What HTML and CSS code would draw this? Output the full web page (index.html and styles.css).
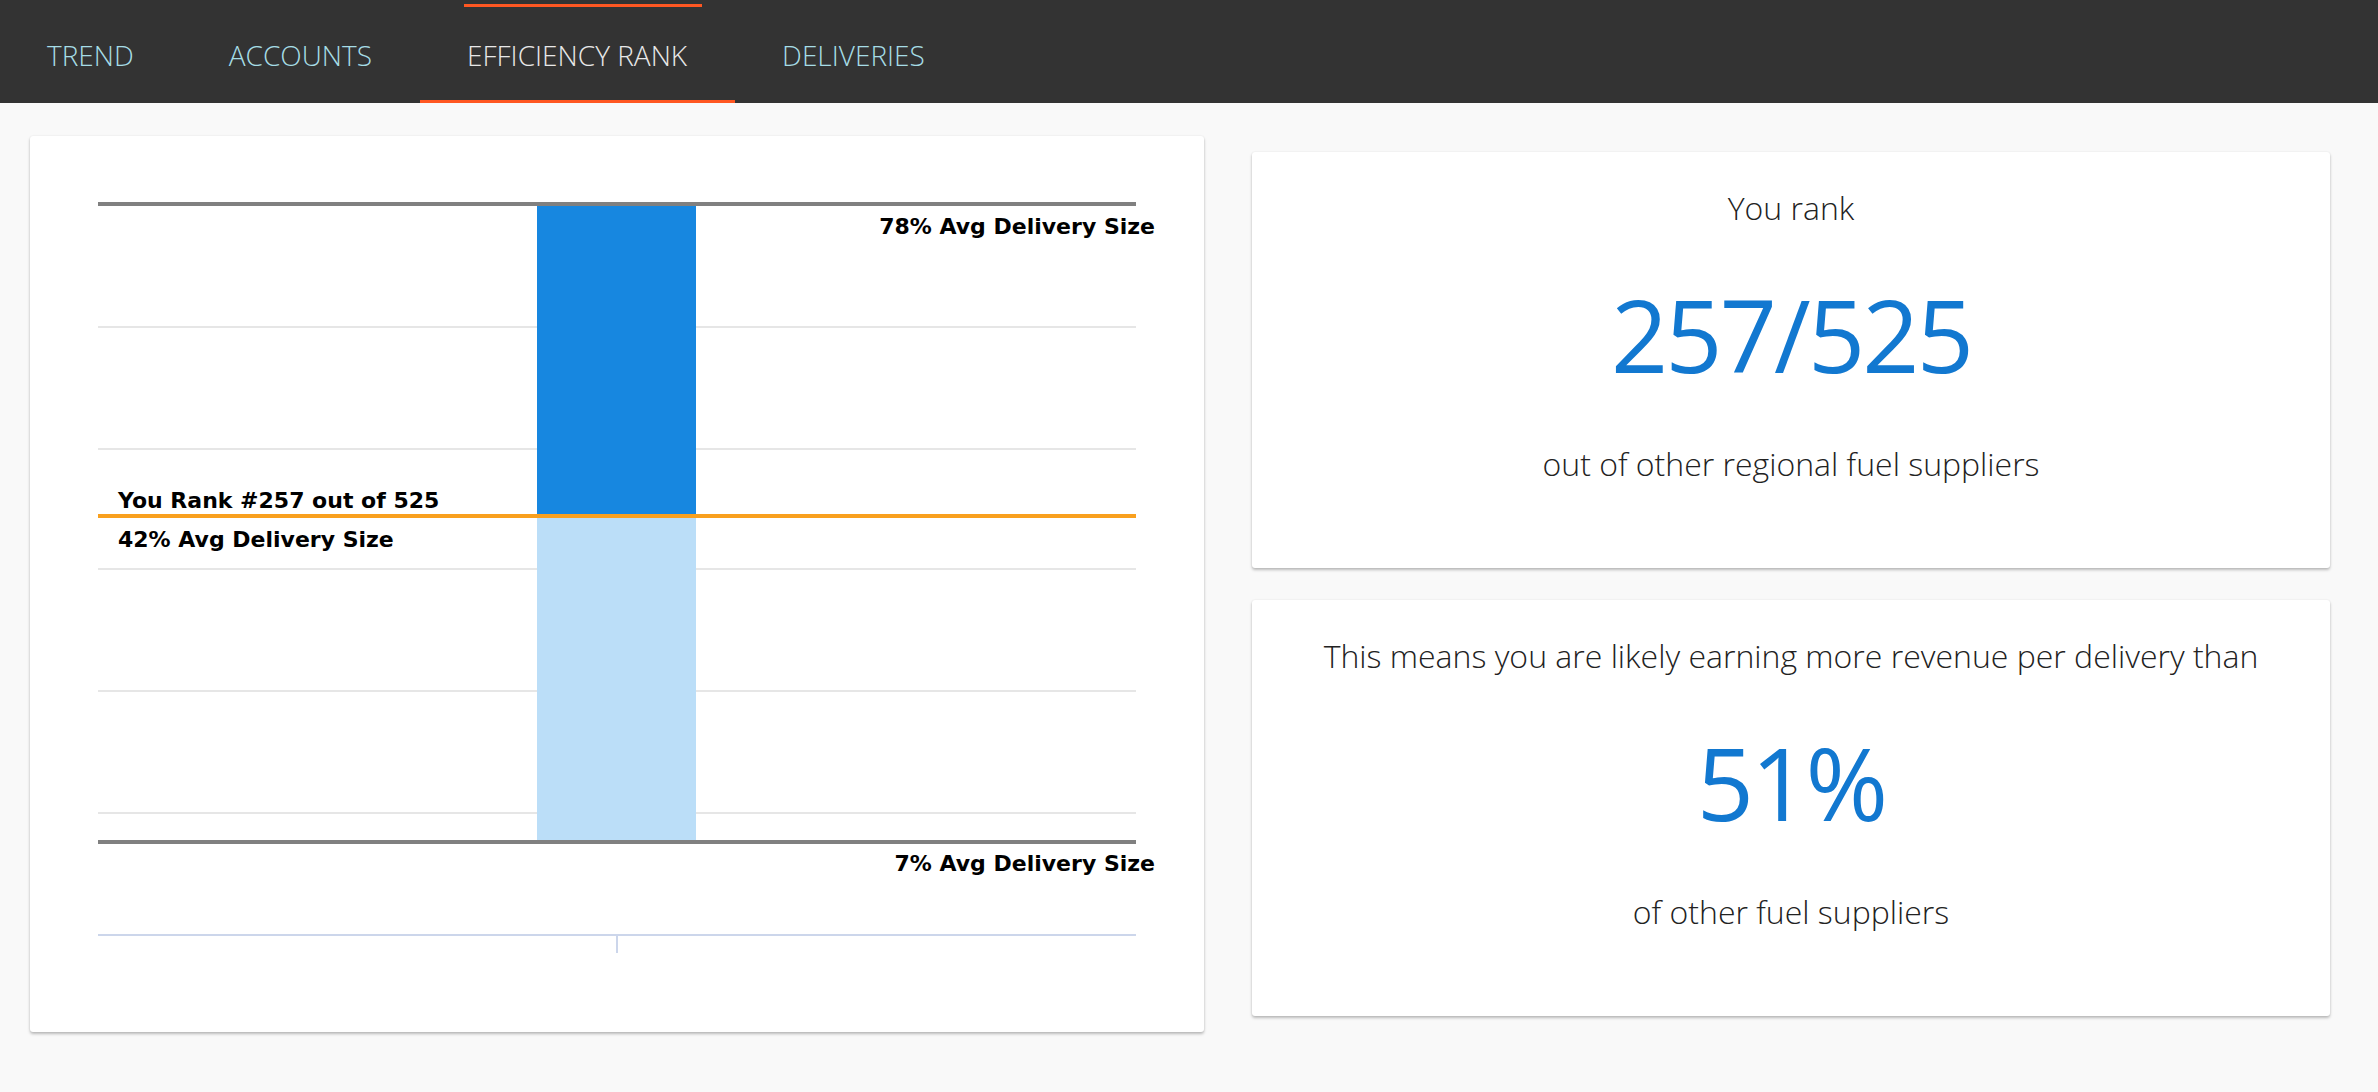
FILE: index.html
```html
<!doctype html>
<html lang="en">

<head>
    <meta charset="UTF-8" />
    <meta name="viewport" content="width=device-width, initial-scale=1.0" />
    <title>Efficiency Rank</title>
    <link rel="stylesheet" href="styles.css">
</head>

<body>
    <nav class="tabs">
        <a class="tab">TREND</a>
        <a class="tab">ACCOUNTS</a>
        <a class="tab active">EFFICIENCY RANK</a>
        <a class="tab">DELIVERIES</a>
    </nav>

    <main class="content">
        <div class="card chart-card">
            <svg class="chart" width="1174" height="896" viewBox="0 0 1174 896">
                <!-- grid -->
                <g stroke="#e6e6e6" stroke-width="2">
                    <line x1="68" y1="191" x2="1106" y2="191" />
                    <line x1="68" y1="313" x2="1106" y2="313" />
                    <line x1="68" y1="433" x2="1106" y2="433" />
                    <line x1="68" y1="555" x2="1106" y2="555" />
                    <line x1="68" y1="677" x2="1106" y2="677" />
                </g>
                <!-- bar -->
                <rect x="507" y="70" width="159" height="310" fill="#1787e0" />
                <rect x="507" y="380" width="159" height="324" fill="#bbdef8" />
                <!-- limits -->
                <line x1="68" y1="68" x2="1106" y2="68" stroke="#808080" stroke-width="4" />
                <line x1="68" y1="706" x2="1106" y2="706" stroke="#808080" stroke-width="4" />
                <line x1="68" y1="380" x2="1106" y2="380" stroke="#f9a01e" stroke-width="4" />
                <!-- x axis -->
                <line x1="68" y1="799" x2="1106" y2="799" stroke="#ccd6eb" stroke-width="2" />
                <line x1="587" y1="800" x2="587" y2="817" stroke="#ccd6eb" stroke-width="2" />
                <!-- labels -->
                <text class="plot-label" x="1125" y="98" text-anchor="end">78% Avg Delivery Size</text>
                <text class="plot-label" x="88" y="372">You Rank #257 out of 525</text>
                <text class="plot-label" x="88" y="411">42% Avg Delivery Size</text>
                <text class="plot-label" x="1125" y="735" text-anchor="end">7% Avg Delivery Size</text>
            </svg>
        </div>

        <div class="side">
            <div class="card stat-card">
                <p class="stat-title">You rank</p>
                <p class="stat-value">257/525</p>
                <p class="stat-note">out of other regional fuel suppliers</p>
            </div>
            <div class="card stat-card">
                <p class="stat-title">This means you are likely earning more revenue per delivery than</p>
                <p class="stat-value">51%</p>
                <p class="stat-note">of other fuel suppliers</p>
            </div>
        </div>
    </main>
</body>

</html>
```

FILE: styles.css
```css
body {
    font-family: "Open Sans", Arial, sans-serif;
    margin: 0;
    padding: 0;
    background-color: #f9f9f9;
    color: #222;
}

.tabs {
    display: flex;
    height: 103px;
    background-color: #333333;
}

.tab {
    position: relative;
    padding: 7px 48px 0 47px;
    line-height: 96px;
    font-size: 28px;
    font-weight: 300;
    color: #a6dde6;
    cursor: pointer;
}

.tab.active {
    color: #e8e8e8;
    box-shadow: inset 0 -3px 0 #ff5722;
}

.tab.active::before {
    content: "";
    position: absolute;
    top: 4px;
    left: 44px;
    width: 238px;
    height: 3px;
    background-color: #ff5722;
}

.content {
    display: flex;
    align-items: flex-start;
    gap: 48px;
    padding: 33px 48px 40px 30px;
}

.card {
    background-color: #fff;
    border-radius: 3px;
    box-shadow: 0 2px 3px rgba(0, 0, 0, 0.25), 0 0 2px rgba(0, 0, 0, 0.08);
}

.chart-card {
    width: 1174px;
    height: 896px;
    flex-shrink: 0;
}

.chart {
    display: block;
}

.plot-label {
    font-family: "DejaVu Sans", Verdana, sans-serif;
    font-size: 22px;
    font-weight: bold;
    fill: #000;
}

.side {
    flex: 1;
    display: flex;
    flex-direction: column;
    gap: 32px;
    margin-top: 16px;
}

.stat-card {
    height: 416px;
    box-sizing: border-box;
    padding-top: 32px;
    text-align: center;
}

.stat-card p {
    margin: 0;
}

.stat-title,
.stat-note {
    font-size: 32px;
    font-weight: 300;
    line-height: 48px;
}

.stat-value {
    margin-top: 52px !important;
    font-size: 100px;
    line-height: 100px;
    letter-spacing: -2.8px;
    color: #1278d0;
}

.stat-note {
    margin-top: 56px !important;
}
```
